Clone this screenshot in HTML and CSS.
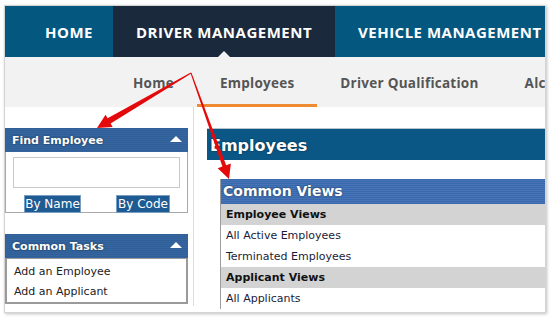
FILE: index.html
```html
<!DOCTYPE html>
<html lang="en">
  <head>
    <meta charset="UTF-8" />
    <title>Driver Management - Employees</title>
    <link rel="stylesheet" href="styles.css">
  </head>
  <body>
    <div class="frame">
      <nav class="topnav">
        <a class="tab tab-home">HOME</a>
        <a class="tab tab-active">DRIVER MANAGEMENT</a>
        <a class="tab tab-vehicle">VEHICLE MANAGEMENT</a>
      </nav>

      <nav class="subnav">
        <a>Home</a>
        <a class="current">Employees</a>
        <a>Driver Qualification</a>
        <a>Alcohol &amp; Drug</a>
      </nav>

      <div class="content">
        <aside class="sidebar">
          <section class="panel">
            <h3 class="panel-head">Find Employee <span class="caret"></span></h3>
            <div class="find">
              <input type="text" class="find-input">
              <div class="find-buttons">
                <button class="btn btn-name">By Name</button>
                <button class="btn btn-code">By Code</button>
              </div>
            </div>
          </section>

          <section class="panel tasks">
            <h3 class="panel-head">Common Tasks <span class="caret"></span></h3>
            <ul class="task-list">
              <li>Add an Employee</li>
              <li>Add an Applicant</li>
            </ul>
          </section>
        </aside>

        <main class="main">
          <h2 class="page-title">Employees</h2>
          <div class="views">
            <h3 class="views-head">Common Views</h3>
            <div class="group">Employee Views</div>
            <div class="row">All Active Employees</div>
            <div class="row">Terminated Employees</div>
            <div class="group">Applicant Views</div>
            <div class="row">All Applicants</div>
          </div>
        </main>
      </div>
    </div>

    <!-- annotation arrows drawn over the screenshot -->
    <svg class="arrows" width="550" height="318" viewBox="0 0 550 318">
      <polygon points="191.25,73.43 110.61,123.48 112.64,126.93 97,128 105.57,114.87 107.59,118.32 190.75,72.57" />
      <polygon points="190.53,73.17 222.40,166.50 217.69,168.19 229,179 230.87,163.47 226.16,165.16 191.47,72.83" />
    </svg>
  </body>
</html>
```

FILE: styles.css
```css
body {
  margin: 0;
  background: #fff;
  position: relative;
  width: 550px;
  height: 318px;
  overflow: hidden;
}

.frame {
  margin: 5px 0 0 4px;
  width: 540px;
  height: 306px;
  border: 1px solid #d4d4d4;
  box-shadow: 1px 1px 3px rgba(0, 0, 0, 0.25);
  overflow: hidden;
  background: #fff;
}

/* top navigation */
.topnav {
  display: flex;
  height: 51px;
  background: #04577f;
  white-space: nowrap;
  font-family: "Open Sans", sans-serif;
  font-weight: 700;
  font-size: 15px;
  letter-spacing: 0.5px;
}

.tab {
  display: flex;
  align-items: center;
  color: #fff;
  flex: none;
  box-sizing: border-box;
}

.tab-home {
  width: 108px;
  padding-left: 40px;
}

.tab-active {
  width: 222px;
  justify-content: center;
  background: #1b293d;
  position: relative;
}

.tab-active::after {
  content: "";
  position: absolute;
  left: 105px;
  bottom: 0;
  border-left: 6px solid transparent;
  border-right: 6px solid transparent;
  border-bottom: 6px solid #f2f2f2;
}

.tab-vehicle {
  padding-left: 23px;
}

/* sub navigation */
.subnav {
  display: flex;
  height: 50px;
  padding-left: 105px;
  background: #f2f2f2;
  box-sizing: border-box;
  white-space: nowrap;
  overflow: hidden;
  font-family: "Open Sans", sans-serif;
  font-weight: 700;
  font-size: 13.5px;
  letter-spacing: 0.25px;
}

.subnav a {
  display: flex;
  align-items: center;
  padding: 5px 23px 0;
  color: #555;
  border-bottom: 3px solid transparent;
}

.subnav a.current {
  border-bottom-color: #f08a32;
}

/* body area */
.content {
  display: flex;
  height: 199px;
  font-family: "DejaVu Sans", Verdana, sans-serif;
  font-size: 11px;
}

.sidebar {
  width: 188px;
  flex: none;
  padding-top: 21px;
  border-right: 1px solid #dcdcdc;
}

.panel {
  width: 183px;
  margin-bottom: 21px;
}

.panel-head {
  display: flex;
  align-items: center;
  justify-content: space-between;
  height: 24px;
  margin: 0;
  padding: 0 6px 0 7px;
  box-sizing: border-box;
  background: repeating-linear-gradient(#2f5f97 0, #2f5f97 1px, #3665a0 1px, #3665a0 2px);
  color: #fff;
  font-size: 11px;
  font-weight: 700;
  text-shadow: 0 0 2px rgba(0, 0, 0, 0.6);
}

.caret {
  border-left: 6px solid transparent;
  border-right: 6px solid transparent;
  border-bottom: 6px solid #fff;
  margin-bottom: 2px;
}

.find {
  border: 1px solid #a8a8a8;
  border-top: none;
  padding: 5px 0 0 7px;
  height: 61px;
  box-sizing: border-box;
}

.find-input {
  display: block;
  width: 167px;
  height: 31px;
  margin: 0;
  box-sizing: border-box;
  border: 1px solid #c8c8c8;
}

.find-buttons {
  display: flex;
  gap: 35px;
  margin: 7px 0 0 11px;
}

.btn {
  height: 18px;
  padding: 0;
  border: 1px solid #7b9dc2;
  background: #1f5b93;
  color: #fff;
  font-family: "DejaVu Sans", Verdana, sans-serif;
  font-size: 12px;
  line-height: 16px;
}

.btn-name {
  width: 57px;
}

.btn-code {
  width: 54px;
}

.task-list {
  list-style: none;
  margin: 0;
  padding: 3px 0 0 7px;
  border: 2px solid #9a9a9a;
  border-top: 1px solid #9a9a9a;
  color: #222;
}

.task-list li {
  height: 20px;
  line-height: 20px;
}

/* main column */
.main {
  flex: 1;
  padding: 21px 0 0 13px;
}

.page-title {
  height: 32px;
  margin: 0;
  padding-left: 3px;
  box-sizing: border-box;
  border-top: 1px solid #b8c4cc;
  background: #0a5785;
  color: #fff;
  font-size: 16px;
  font-weight: 700;
  line-height: 33px;
  text-shadow: 0 0 2px rgba(0, 0, 0, 0.6);
}

.views {
  margin: 19px 0 0 13px;
  border-left: 1px solid #9c9c9c;
}

.views-head {
  height: 25px;
  margin: 0;
  padding-left: 2px;
  background: repeating-linear-gradient(#3a69ad 0, #3a69ad 1px, #4674b6 1px, #4674b6 2px);
  color: #fff;
  font-size: 14px;
  font-weight: 700;
  line-height: 25px;
  text-shadow: 0 0 2px rgba(0, 0, 0, 0.6);
}

.group,
.row {
  height: 21px;
  line-height: 21px;
  padding-left: 5px;
}

.group {
  background: #d3d3d3;
  font-weight: 700;
  color: #111;
}

.row {
  color: #1c1c38;
}

.arrows {
  position: absolute;
  top: 0;
  left: 0;
  pointer-events: none;
}

.arrows polygon {
  fill: #e4090b;
}
```
